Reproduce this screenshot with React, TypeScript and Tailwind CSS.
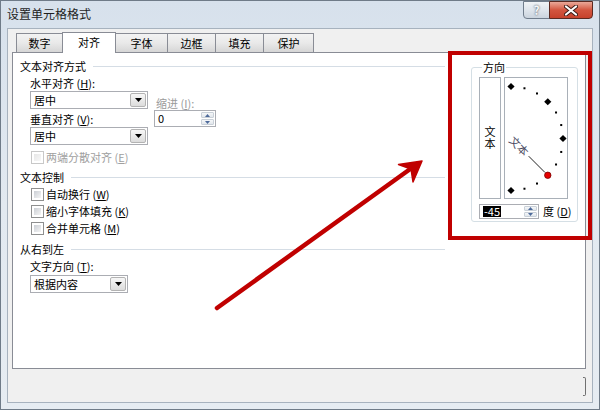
import type { ReactNode } from "react";

const tabs = [
  { label: "数字", w: "w-[47px]" },
  { label: "对齐", w: "w-[54px]", active: true },
  { label: "字体", w: "w-[53px]" },
  { label: "边框", w: "w-[49px]" },
  { label: "填充", w: "w-[49px]" },
  { label: "保护", w: "w-[51px]" },
];

// accelerator key shown as "(X)"
const Key = ({ k }: { k: string }) => (
  <>
    {" "}(<span className="underline">{k}</span>)
  </>
);

const DownArrow = () => (
  <svg width="7" height="4" viewBox="0 0 7 4">
    <path d="M0 0h7L3.5 4z" fill="#000" />
  </svg>
);

const Combo = ({ value, width }: { value: string; width: string }) => (
  <div className={`flex h-[18px] items-center border border-[#abadb3] bg-white p-px ${width}`}>
    <span className="flex-1 pl-[2px] leading-[14px]">{value}</span>
    <span className="flex h-full w-[16px] items-center justify-center rounded-[2px] border border-[#b3b3b3] bg-gradient-to-b from-[#f7f7f7] to-[#dcdcdc]">
      <DownArrow />
    </span>
  </div>
);

const SpinArrows = () => (
  <span className="flex h-full w-[14px] flex-col gap-px py-px pr-px">
    <span className="flex flex-1 items-center justify-center rounded-[1px] border border-[#c9d0d8] bg-gradient-to-b from-[#f5f7f9] to-[#e1e6eb]">
      <svg width="5" height="3" viewBox="0 0 5 3">
        <path d="M0 3h5L2.5 0z" fill="#4d6a9a" />
      </svg>
    </span>
    <span className="flex flex-1 items-center justify-center rounded-[1px] border border-[#c9d0d8] bg-gradient-to-b from-[#f5f7f9] to-[#e1e6eb]">
      <svg width="5" height="3" viewBox="0 0 5 3">
        <path d="M0 0h5L2.5 3z" fill="#4d6a9a" />
      </svg>
    </span>
  </span>
);

const CheckBox = ({ label, disabled }: { label: ReactNode; disabled?: boolean }) => (
  <div className={`ml-[11px] flex h-[13px] items-center gap-[2px] ${disabled ? "text-[#a0a0a0]" : ""}`}>
    <span
      className={`h-[13px] w-[13px] border bg-white p-[2px] ${disabled ? "border-[#c8c8c8]" : "border-[#8e8f8f]"}`}
    >
      <span
        className={`block h-full w-full bg-gradient-to-br ${
          disabled ? "from-[#e6e6e6] to-[#f8f8f8]" : "from-[#cbcfd5] to-[#f5f5f5]"
        }`}
      />
    </span>
    <span className="leading-[13px]">{label}</span>
  </div>
);

const GroupHeader = ({ children }: { children: ReactNode }) => (
  <div className="flex h-[13px] items-center gap-[7px]">
    <span className="leading-[13px]">{children}</span>
    <span className="h-px flex-1 bg-[#d5dde5]" />
  </div>
);

// orientation dial: half ring of marks, current angle in red
const Dial = () => {
  const cx = 6;
  const cy = 60.5;
  const r = 52;
  const marks = [];
  for (let a = 90; a >= -90; a -= 15) {
    const rad = (a * Math.PI) / 180;
    const x = cx + r * Math.cos(rad);
    const y = cy - r * Math.sin(rad);
    if (a === -45) {
      marks.push(<circle key={a} cx={x} cy={y} r="3.2" fill="#e60000" stroke="#700" strokeWidth="0.8" />);
    } else if (a % 45 === 0) {
      marks.push(
        <polygon key={a} points={`${x},${y - 3.6} ${x + 3.6},${y} ${x},${y + 3.6} ${x - 3.6},${y}`} fill="#000" />
      );
    } else {
      marks.push(<rect key={a} x={x - 1} y={y - 1} width="2" height="2" fill="#000" />);
    }
  }
  const d = Math.SQRT1_2;
  return (
    <svg width="62" height="120" viewBox="0 0 62 120" className="block">
      <text
        x={cx}
        y={cy + 4}
        transform={`rotate(45 ${cx} ${cy})`}
        fontSize="11"
        fill="#4b4b63"
        fontFamily="'Noto Sans CJK SC', sans-serif"
      >
        文本
      </text>
      <line x1={cx + 25 * d} y1={cy + 25 * d} x2={cx + 48 * d} y2={cy + 48 * d} stroke="#222" strokeWidth="1" />
      {marks}
    </svg>
  );
};

export default function App() {
  return (
    <div className="relative h-[410px] w-[600px] overflow-hidden border border-[#6f7b88] bg-gradient-to-b from-[#d7e1ec] via-[#e2e9f0] to-[#e6ecf2] font-['Noto_Sans_CJK_SC','Liberation_Sans',sans-serif] text-[11px] text-black">
      {/* title bar */}
      <div className="flex h-[27px] items-start">
        <span className="pl-[6px] pt-[6px] text-[12px] leading-[14px] text-[#1e1e1e]">设置单元格格式</span>
        <div className="ml-auto mr-[6px] flex">
          <span className="flex h-[18px] w-[27px] items-center justify-center rounded-bl-[4px] border border-[#707d8c] bg-gradient-to-b from-[#f0f3f6] via-[#dfe5ec] to-[#cbd4de] text-[12px] font-bold leading-none text-[#f4f6f9] [text-shadow:0_0_2px_#2c3440]">
            ?
          </span>
          <span className="-ml-px flex h-[18px] w-[44px] items-center justify-center rounded-br-[4px] border border-[#5b2a22] bg-gradient-to-b from-[#e9a899] via-[#d2553f] to-[#c6422c]">
            <svg width="14" height="11" viewBox="0 0 14 11">
              <path d="M2 1.5l10 8M12 1.5l-10 8" stroke="#3a1a15" strokeWidth="4" strokeLinecap="round" />
              <path d="M2 1.5l10 8M12 1.5l-10 8" stroke="#fff" strokeWidth="2.2" strokeLinecap="round" />
            </svg>
          </span>
        </div>
      </div>

      {/* client area */}
      <div className="mx-[6px] h-[375px] border border-[#a7b2be] bg-[#f0f0f0] pl-[4px] pr-[6px] pt-[3px]">
        <div className="flex h-[20px] items-end pl-[4px]">
          {tabs.map((t, i) => (
            <div
              key={t.label}
              className={`${t.w} ${i > 0 ? "-ml-px" : ""} flex items-center justify-center border border-b-0 border-[#898c95] leading-[13px] ${
                t.active
                  ? "relative z-10 -mb-px h-[21px] bg-white pb-[2px]"
                  : "h-[19px] bg-gradient-to-b from-[#f3f3f3] via-[#e9e9e9] to-[#d6d6d6]"
              }`}
            >
              {t.label}
            </div>
          ))}
        </div>

        <div className="flex h-[317px] items-start border border-[#898c95] bg-white pl-[7px] pt-[7px]">
          {/* left column */}
          <div className="flex w-[425px] flex-col">
            <GroupHeader>文本对齐方式</GroupHeader>
            <div className="ml-[10px] mt-[4px] flex gap-[6px]">
              <div className="flex flex-col">
                <span className="h-[13px] leading-[13px]">
                  水平对齐<Key k="H" />:
                </span>
                <div className="mt-px">
                  <Combo value="居中" width="w-[118px]" />
                </div>
                <span className="mt-[4px] h-[13px] leading-[13px]">
                  垂直对齐<Key k="V" />:
                </span>
                <div className="mt-px">
                  <Combo value="居中" width="w-[118px]" />
                </div>
              </div>
              <div className="flex flex-col pt-[20px]">
                <span className="h-[13px] pl-[2px] leading-[13px] text-[#9a9a9a]">
                  缩进<Key k="I" />:
                </span>
                <div className="flex h-[17px] w-[62px] items-center border border-[#abadb3] bg-white">
                  <span className="flex-1 pl-[3px] leading-[13px]">0</span>
                  <SpinArrows />
                </div>
              </div>
            </div>
            <div className="mt-[6px]">
              <CheckBox
                disabled
                label={
                  <>
                    两端分散对齐<Key k="E" />
                  </>
                }
              />
            </div>

            <div className="mt-[7px]">
              <GroupHeader>文本控制</GroupHeader>
            </div>
            <div className="mt-[4px] flex flex-col gap-[4px]">
              <CheckBox
                label={
                  <>
                    自动换行<Key k="W" />
                  </>
                }
              />
              <CheckBox
                label={
                  <>
                    缩小字体填充<Key k="K" />
                  </>
                }
              />
              <CheckBox
                label={
                  <>
                    合并单元格<Key k="M" />
                  </>
                }
              />
            </div>

            <div className="mt-[8px]">
              <GroupHeader>从右到左</GroupHeader>
            </div>
            <div className="ml-[10px] mt-[4px] flex flex-col">
              <span className="h-[13px] leading-[13px]">
                文字方向<Key k="T" />:
              </span>
              <div className="mt-[2px]">
                <Combo value="根据内容" width="w-[98px]" />
              </div>
            </div>
          </div>

          {/* orientation group */}
          <fieldset className="ml-[26px] mt-px w-[107px] rounded-[3px] border border-[#d5dfe5] pb-[2px] pl-[7px] pr-[2px] pt-[3px]">
            <legend className="ml-[3px] px-px leading-[13px]">方向</legend>
            <div className="flex gap-[3px]">
              <div className="flex h-[122px] w-[22px] items-center justify-center border border-[#a9b0b8]">
                <span className="leading-[12px] tracking-[1px] [writing-mode:vertical-rl]">文本</span>
              </div>
              <div className="h-[122px] w-[64px] border border-[#a9b0b8]">
                <Dial />
              </div>
            </div>
            <div className="mt-[5px] flex items-center whitespace-nowrap">
              <div className="flex h-[15px] w-[60px] shrink-0 items-center border border-[#abadb3] bg-white">
                <span className="ml-[3px] bg-black px-px leading-[11px] text-white">-45</span>
                <span className="flex-1" />
                <SpinArrows />
              </div>
              <span className="ml-[4px] leading-[13px]">
                度<Key k="D" />
              </span>
            </div>
          </fieldset>
        </div>

        {/* edge of the button row */}
        <div className="flex justify-end pt-[8px]">
          <span className="h-[19px] w-[3px] rounded-r-[2px] border-y border-r border-[#707070]" />
        </div>
      </div>

      {/* red annotation */}
      <svg className="pointer-events-none absolute left-0 top-0" width="600" height="410" viewBox="0 0 600 410">
        <rect x="449" y="52" width="140" height="185" fill="none" stroke="#c00000" strokeWidth="4" />
        <line x1="216" y1="307" x2="412" y2="166" stroke="#c00000" strokeWidth="4.5" strokeLinecap="round" />
        <path d="M421 160 L397.5 163.5 L410 168 L412 181 Z" fill="#c00000" stroke="#c00000" strokeWidth="1.5" strokeLinejoin="round" />
      </svg>
    </div>
  );
}
